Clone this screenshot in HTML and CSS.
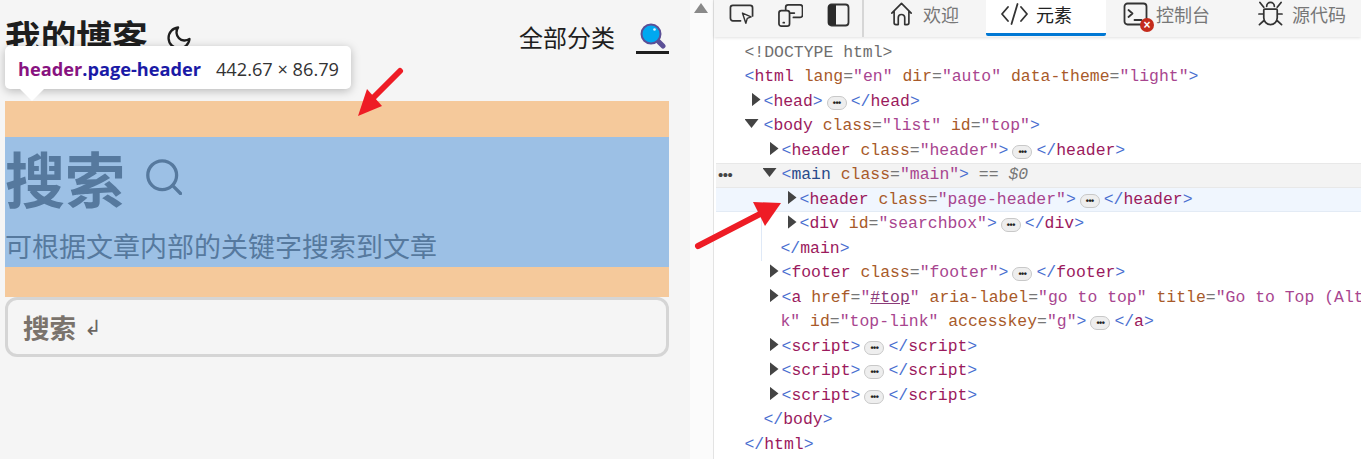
FILE: index.html
```html
<!DOCTYPE html>
<html lang="zh">
<head>
<meta charset="utf-8">
<title>我的博客</title>
<link rel="stylesheet" href="styles.css">
</head>
<body>
<div class="app">
  <section class="page">
    <nav class="nav">
      <div class="brand">
        <span class="logo">我的博客</span>
        <svg class="moon" viewBox="0 0 24 24"><path d="M21 12.79A9 9 0 1 1 11.21 3 7 7 0 0 0 21 12.79z"/></svg>
      </div>
      <div class="menu">
        <span class="menu-item">全部分类</span>
        <span class="menu-search">
          <svg viewBox="0 0 26 26" width="26" height="26"><path class="mg-handle" d="M17 17l6 6"/><circle class="mg-glass" cx="11" cy="11" r="9.5"/><circle class="mg-shine" cx="14.5" cy="6.5" r="1.3"/></svg>
        </span>
      </div>
    </nav>
    <header class="page-header">
      <div class="page-header-box">
        <h1 class="ph-title">搜索<svg class="ph-icon" viewBox="0 0 24 24"><circle cx="10.800" cy="10.800" r="9.600"/><path d="M17.800 17.800L23 23"/></svg></h1>
        <p class="ph-desc">可根据文章内部的关键字搜索到文章</p>
      </div>
    </header>
    <div class="searchbox"><b class="sb-text">搜索</b><span class="sb-enter">↲</span></div>
  </section>

  <div class="scroll"><span class="scroll-up"></span></div>

  <section class="devtools">
    <div class="toolbar">
      <div class="tool-icons">
        <svg class="ti" viewBox="0 0 26 24"><path d="M12 18H4a2.500 2.500 0 0 1-2.500-2.500v-11A2.500 2.500 0 0 1 4 2h18a2.500 2.500 0 0 1 2.500 2.500V13"/><path class="ti-thin" d="M14 10l9 4-4 1.500-1.500 5z"/></svg>
        <svg class="ti" viewBox="0 0 26 24"><path d="M8 7V4a2.500 2.500 0 0 1 2.500-2.500h12.500a2.500 2.500 0 0 1 2.500 2.500v8a2.500 2.500 0 0 1-2.500 2.500h-7"/><rect x="1" y="7.500" width="11" height="16" rx="2.500"/><path d="M13 10h4M5.500 20h1"/></svg>
        <svg class="ti ti-dock" viewBox="0 0 24 24"><rect x="1.500" y="1.500" width="20" height="21" rx="3"/><path class="ti-fill" d="M3 2h6v20H3a2 2 0 0 1-2-2V4a2 2 0 0 1 2-2z"/></svg>
      </div>
      <div class="tabs">
        <div class="tab tab-home"><svg class="ti" viewBox="0 0 24 26"><path d="M1.500 12L12 1.500 22.500 12M4 10v12.500a2 2 0 0 0 2 2h2.500V17a3.500 3.500 0 0 1 7 0v7.500H18a2 2 0 0 0 2-2V10"/></svg><span>欢迎</span></div>
        <div class="tab tab-active"><svg class="ti ti-code" viewBox="0 0 27 24"><path d="M7 5l-6 7 6 7M20 5l6 7-6 7M16.500 2l-6 20"/></svg><span>元素</span></div>
        <div class="tab tab-console"><span class="console-ico"><svg class="ti" viewBox="0 0 24 24"><rect x="1" y="1.500" width="22" height="21" rx="3"/><path d="M5 8l4 3.500-4 3.500M11 18h7"/></svg><i class="err">×</i></span><span>控制台</span></div>
        <div class="tab tab-src"><svg class="ti" viewBox="0 0 26 26"><path d="M9 5a4 4 0 0 1 8 0M7 8h12a1 1 0 0 1 1 1v8a7 7 0 0 1-14 0V9a1 1 0 0 1 1-1zM2 1l4 5M24 1l-4 5M1 13h5M20 13h5M1.500 24l5-4.500M24.500 24l-5-4.500"/></svg><span>源代码</span></div>
      </div>
    </div>
    <div class="dom">
      <div class="row i0 doc">&lt;!DOCTYPE html&gt;</div>
      <div class="row i0"><u>&lt;</u><b>html</b> <s>lang</s><em>=</em><q>"en"</q> <s>dir</s><em>=</em><q>"auto"</q> <s>data-theme</s><em>=</em><q>"light"</q><u>&gt;</u></div>
      <div class="row i1"><span class="tri r"></span><u>&lt;</u><b>head</b><u>&gt;</u><span class="pill">•••</span><u>&lt;/</u><b>head</b><u>&gt;</u></div>
      <div class="row i1"><span class="tri d"></span><u>&lt;</u><b>body</b> <s>class</s><em>=</em><q>"list"</q> <s>id</s><em>=</em><q>"top"</q><u>&gt;</u></div>
      <div class="row i2"><span class="tri r"></span><u>&lt;</u><b>header</b> <s>class</s><em>=</em><q>"header"</q><u>&gt;</u><span class="pill">•••</span><u>&lt;/</u><b>header</b><u>&gt;</u></div>
      <div class="row i2 row-main"><span class="row-dots">•••</span><span class="tri d"></span><u>&lt;</u><b class="dk">main</b> <s>class</s><em>=</em><q>"main"</q><u>&gt;</u> <span class="dollar">== $0</span></div>
      <div class="nest">
        <div class="row i3 row-sel"><span class="tri r"></span><u>&lt;</u><b>header</b> <s>class</s><em>=</em><q>"page-header"</q><u>&gt;</u><span class="pill">•••</span><u>&lt;/</u><b>header</b><u>&gt;</u></div>
        <div class="row i3"><span class="tri r"></span><u>&lt;</u><b>div</b> <s>id</s><em>=</em><q>"searchbox"</q><u>&gt;</u><span class="pill">•••</span><u>&lt;/</u><b>div</b><u>&gt;</u></div>
        <div class="row i2 back"><u>&lt;/</u><b>main</b><u>&gt;</u></div>
      </div>
      <div class="row i2"><span class="tri r"></span><u>&lt;</u><b>footer</b> <s>class</s><em>=</em><q>"footer"</q><u>&gt;</u><span class="pill">•••</span><u>&lt;/</u><b>footer</b><u>&gt;</u></div>
      <div class="row i2"><span class="tri r"></span><u>&lt;</u><b>a</b> <s>href</s><em>=</em><q>"<span class="link">#top</span>"</q> <s>aria-label</s><em>=</em><q>"go to top"</q> <s>title</s><em>=</em><q>"Go to Top (Alt</q></div>
      <div class="row i2 back"><q>k"</q> <s>id</s><em>=</em><q>"top-link"</q> <s>accesskey</s><em>=</em><q>"g"</q><u>&gt;</u><span class="pill">•••</span><u>&lt;/</u><b>a</b><u>&gt;</u></div>
      <div class="row i2"><span class="tri r"></span><u>&lt;</u><b>script</b><u>&gt;</u><span class="pill">•••</span><u>&lt;/</u><b>script</b><u>&gt;</u></div>
      <div class="row i2"><span class="tri r"></span><u>&lt;</u><b>script</b><u>&gt;</u><span class="pill">•••</span><u>&lt;/</u><b>script</b><u>&gt;</u></div>
      <div class="row i2"><span class="tri r"></span><u>&lt;</u><b>script</b><u>&gt;</u><span class="pill">•••</span><u>&lt;/</u><b>script</b><u>&gt;</u></div>
      <div class="row i1"><u>&lt;/</u><b>body</b><u>&gt;</u></div>
      <div class="row i0"><u>&lt;/</u><b>html</b><u>&gt;</u></div>
    </div>
  </section>

  <div class="tip"><span class="tip-tag">header</span><span class="tip-cls">.page-header</span><span class="tip-size">442.67 × 86.79</span></div>
  <svg class="arrow arrow-a" viewBox="0 0 50 54"><path d="M45 4L18 31"/><path class="arrow-head" d="M3 49l9-27 15 17z"/></svg>
  <svg class="arrow arrow-b" viewBox="0 0 90 52"><path d="M4 47L66 15"/><path class="arrow-head" d="M87 4L59 3l12 24z"/></svg>
</div>
</body>
</html>
```
FILE: styles.css
```css
* { box-sizing: border-box; }
html, body { margin: 0; height: 100%; overflow: hidden; }
body { font-family: "Noto Sans CJK SC", "Liberation Sans", sans-serif; background: #f5f5f5; }
.app { position: relative; display: flex; width: 1361px; height: 459px; overflow: hidden; }

/* page */
.page { width: 690px; flex: none; padding-left: 5px; padding-right: 21px; background: #f5f5f5; }
.nav { height: 101px; display: flex; justify-content: space-between; align-items: flex-start; color: #1e1e1e; }
.brand { display: flex; align-items: center; height: 30px; margin-top: 21px; }
.logo { font-size: 35.7px; font-weight: 700; line-height: 30px; white-space: nowrap; }
.moon { width: 28px; height: 28px; margin-left: 17px; margin-top: 3px; fill: none; stroke: #1e1e1e; stroke-width: 2; stroke-linecap: round; stroke-linejoin: round; }
.menu { display: flex; align-items: flex-start; margin-top: 19px; }
.menu-item { font-size: 24px; line-height: 36px; margin-right: 21px; }
.menu-search { width: 33px; height: 36px; border-bottom: 3px solid #1e1e1e; padding: 5px 0 0 4px; margin-top: -1px; }
.menu-search svg { display: block; }
.mg-handle { stroke: #5b4f96; stroke-width: 5; stroke-linecap: round; fill: none; }
.mg-glass { fill: #00a8f0; stroke: #5b4f96; stroke-width: 2; }
.mg-shine { fill: #dff4ff; }

.page-header { background: #f5c99b; padding: 36px 0 30px; }
.page-header-box { background: #9cc0e5; height: 130px; color: #56799e; }
.ph-title { margin: 0; height: 80px; font-size: 60px; line-height: 80px; font-weight: 700; display: flex; align-items: center; white-space: nowrap; }
.ph-icon { width: 36px; height: 36px; margin-left: 21px; margin-top: 0; fill: none; stroke: #56799e; stroke-width: 2.200; stroke-linecap: round; }
.ph-desc { margin: 0; padding-top: 14px; font-size: 27px; line-height: 30px; white-space: nowrap; }

.searchbox { height: 60px; border: 3px solid #d5d5d5; border-radius: 12px; padding-left: 15px; display: flex; align-items: center; color: #7a736c; }
.sb-text { font-size: 26.6px; line-height: 34px; }
.sb-enter { font-family: "DejaVu Sans", sans-serif; font-size: 21px; line-height: 24px; margin-left: 8px; margin-top: 2px; color: #6a6560; }

/* scrollbar */
.scroll { width: 24px; flex: none; background: #fbfbfb; border-right: 1px solid #e3e3e3; position: relative; }
.scroll-up { display: block; width: 0; height: 0; margin: 3px 0 0 4px; border-left: 7.500px solid transparent; border-right: 7.500px solid transparent; border-bottom: 10px solid #8a8a8a; }

/* devtools */
.devtools { flex: 1; min-width: 0; background: #fff; }
.toolbar { height: 37px; display: flex; background: #f5f5f5; box-shadow: 0 1px 3px rgba(0,0,0,.12); position: relative; }
.tool-icons { width: 150px; flex: none; padding-left: 15px; display: flex; align-items: flex-start; gap: 24px; padding-top: 3px; border-right: 2px solid #d6d6d6; height: 37px; }
.ti { width: 25px; height: 24px; flex: none; fill: none; stroke: #333; stroke-width: 1.800; stroke-linecap: round; stroke-linejoin: round; }
.ti-thin { stroke-width: 1.500; }
.ti-fill { fill: #2b2b2b; stroke: none; }
.ti-dock { width: 24px; }
.tabs { display: flex; flex: 1; font-size: 18px; color: #777; }
.tab { display: flex; align-items: flex-start; height: 36px; white-space: nowrap; }
.tab span { line-height: 28px; }
.tab .ti { margin-top: 2px; }
.tab-home { width: 122px; padding-left: 25px; gap: 9px; }
.tab-active { width: 120px; padding-left: 15px; gap: 8px; background: #fff; color: #222; border-bottom: 3px solid #0078d4; border-radius: 0 0 2px 2px; }
.ti-code { width: 27px; }
.tab-console { width: 152px; padding-left: 17px; gap: 9px; }
.console-ico { position: relative; width: 24px; flex: none; }
.console-ico .ti { display: block; }
.err { position: absolute; left: 17px; top: 18px; width: 14px; height: 14px; border-radius: 50%; background: #c42b1c; color: #fff; font-style: normal; font-weight: 700; font-size: 12px; line-height: 14px; text-align: center; font-family: "Liberation Sans", sans-serif; }
.tab-src { padding-left: 0; gap: 9px; }
.tab-src .ti { width: 25px; height: 26px; margin-top: 1px; }

.dom { padding-top: 3.5px; font-family: "Liberation Mono", monospace; font-size: 16.45px; line-height: 24.5px; color: #444; }
.row { height: 24.5px; position: relative; white-space: pre; }
.i0 { padding-left: 30.5px; }
.i1 { padding-left: 49.5px; }
.i2 { padding-left: 67.5px; }
.i3 { padding-left: 85.5px; }
.back { padding-left: 66.5px; }
.doc { color: #6e6e6e; }
.row u { color: #4a6fd0; text-decoration: none; }
.row b { color: #9b1a5d; font-weight: 400; }
.row b.dk { color: #2a4a8a; }
.row s { color: #a85a2a; text-decoration: none; }
.row em { color: #777; font-style: normal; }
.row q { color: #a8458f; quotes: none; }
.link { text-decoration: underline; color: #8a3a78; }
.dollar { color: #777; font-style: italic; }
.tri { display: inline-block; }
.tri.r { margin-left: -12px; margin-right: 3px; width: 9px; height: 14px; background: #444; clip-path: polygon(0 0, 100% 50%, 0 100%); vertical-align: -1px; }
.tri.d { margin-left: -19px; margin-right: 5px; width: 14px; height: 9px; background: #444; clip-path: polygon(0 0, 100% 0, 50% 100%); vertical-align: 2px; }
.pill { display: inline-block; width: 20px; height: 14px; margin: 0 4px; border: 1px solid #c8c8c8; border-radius: 7px; background: #eee; color: #222; font-family: "Liberation Sans", sans-serif; font-size: 9px; font-weight: 700; letter-spacing: -.5px; line-height: 12px; text-align: center; vertical-align: 0; }
.row-main { background: #f3f3f3; border-top: 1px solid #e8e8e8; border-bottom: 1px solid #e8e8e8; line-height: 22.500px; margin-left: 2px; padding-left: 65.5px; }
.row-dots { position: absolute; left: 2px; top: 0; font-family: "Liberation Sans", sans-serif; font-size: 15px; color: #444; letter-spacing: -.5px; }
.nest { position: relative; }
.nest::before { content: ""; position: absolute; left: 47px; top: 0; bottom: 0; width: 1px; background: #dfe9f7; }
.row-sel { background: #f0f6fe; border-bottom: 1px solid #e3ebf5; line-height: 23.500px; margin-left: 2px; padding-left: 83.5px; }

/* overlays */
.tip { position: absolute; left: 5px; top: 46px; width: 346px; height: 43px; background: #fff; border-radius: 5px; box-shadow: 0 2px 10px rgba(0,0,0,.25); padding-left: 13px; font-family: "Open Sans", "Liberation Sans", sans-serif; font-size: 18.200px; line-height: 46px; white-space: nowrap; }
.tip::after { content: ""; position: absolute; left: 15px; top: 43px; border-left: 12px solid transparent; border-right: 12px solid transparent; border-top: 12px solid #fff; }
.tip-tag { color: #881280; font-weight: 700; }
.tip-cls { color: #1a1aa6; font-weight: 700; }
.tip-size { color: #333; margin-left: 15px; }
.arrow { position: absolute; fill: none; stroke: #ee1c25; stroke-width: 6; stroke-linecap: round; }
.arrow-head { fill: #ee1c25; stroke: none; }
.arrow-a { left: 355px; top: 67px; width: 50px; height: 54px; }
.arrow-b { left: 694px; top: 199px; width: 90px; height: 52px; }
```
